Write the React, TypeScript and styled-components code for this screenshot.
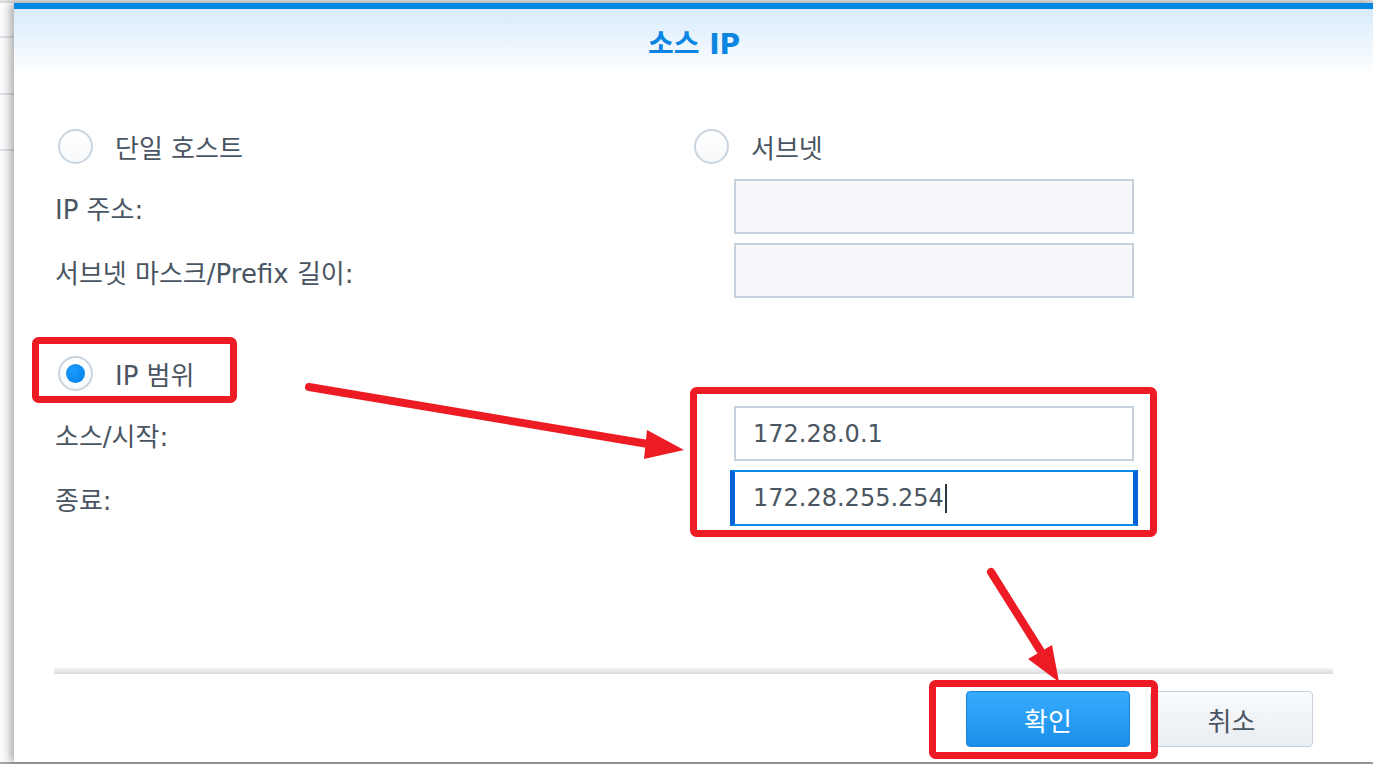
import React from "react";
import styled, { createGlobalStyle } from "styled-components";

const GlobalStyle = createGlobalStyle`
  html, body { margin: 0; padding: 0; background: #fafafa; overflow: hidden; }
  body { font-family: "DejaVu Sans", "Noto Sans CJK KR", sans-serif; }
  * { box-sizing: border-box; }
`;

const Page = styled.div`
  position: relative;
  width: 1373px;
  height: 764px;
  overflow: hidden;
  padding: 3px 0 0 14px;
  background:
    linear-gradient(#e6e6e6, #d4d4d4) top left / 100% 3px no-repeat,
    linear-gradient(#a4a4a4, #a4a4a4) bottom left / 100% 2px no-repeat,
    linear-gradient(
      to bottom,
      transparent 36px, #dce2e9 36px, #dce2e9 38px, transparent 38px,
      transparent 93px, #dce2e9 93px, #dce2e9 95px, transparent 95px,
      transparent 149px, #dce2e9 149px, #dce2e9 151px, transparent 151px
    ),
    #fbfbfb;
`;

const Dialog = styled.div`
  width: 1360px;
  height: 759px;
  background: #ffffff;
  display: flex;
  flex-direction: column;
  box-shadow: -4px 0 8px rgba(0, 0, 0, 0.3);
`;

const TopBar = styled.div`
  height: 6px;
  background: #0088e6;
`;

const Header = styled.div`
  height: 66px;
  background: linear-gradient(#d8ebfb, #ffffff);
  display: flex;
  align-items: center;
  justify-content: center;
`;

const Title = styled.div`
  font-size: 28px;
  font-weight: bold;
  color: #0a86e2;
`;

const Body = styled.div`
  flex: 1;
  padding: 53px 0 0 41px;
`;

const FormRow = styled.div<{ $h: number; $mt: number }>`
  display: grid;
  grid-template-columns: 639px 1fr;
  align-items: center;
  height: ${(p) => p.$h}px;
  margin-top: ${(p) => p.$mt}px;
`;

const Label = styled.div`
  font-size: 26px;
  color: #4a5562;
  padding-top: 1px;
`;

const RadioLabel = styled.div<{ $offset?: number }>`
  display: flex;
  align-items: center;
  gap: 22px;
  margin-left: ${(p) => p.$offset ?? 0}px;
  font-size: 26px;
  color: #4a5562;
`;

const RadioCircle = styled.div`
  width: 35px;
  height: 35px;
  border-radius: 50%;
  border: 2px solid #c9d4df;
  background: linear-gradient(#ffffff, #f7f9fb);
  display: grid;
  place-items: center;
  flex: none;
`;

const RadioDot = styled.div`
  width: 19px;
  height: 19px;
  border-radius: 50%;
  background: radial-gradient(circle at 40% 35%, #1c9cff, #0080e8);
`;

const Field = styled.div<{ $disabled?: boolean }>`
  width: 400px;
  height: 55px;
  margin-left: 40px;
  border: 2px solid #c6d1dc;
  background: ${(p) => (p.$disabled ? "#f5f7fa" : "#ffffff")};
  display: flex;
  align-items: center;
  padding-left: 17px;
  font-size: 24px;
  color: #4a5562;
`;

const FocusField = styled.div`
  width: 408px;
  height: 56px;
  margin-left: 36px;
  border-top: 2px solid #0a88e8;
  border-bottom: 2px solid #0a88e8;
  border-left: 5px solid #0064d8;
  border-right: 5px solid #0064d8;
  background: #ffffff;
  display: flex;
  align-items: center;
  padding-left: 18px;
  font-size: 24px;
  color: #4a5562;
`;

const Caret = styled.span`
  display: inline-block;
  width: 2px;
  height: 29px;
  background: #2e3740;
  margin-left: 1px;
`;

const Footer = styled.div`
  margin-left: 40px;
  width: 1279px;
  padding-bottom: 15px;
`;

const Separator = styled.div`
  height: 6px;
  background: linear-gradient(#f3f5f5, #e6e9e9 50%, #d8dbdb);
`;

const ButtonRow = styled.div`
  display: flex;
  justify-content: flex-end;
  gap: 20px;
  margin-top: 17px;
  padding-right: 20px;
`;

const Button = styled.div<{ $primary?: boolean }>`
  width: ${(p) => (p.$primary ? 164 : 163)}px;
  height: 56px;
  border-radius: 4px;
  display: flex;
  align-items: center;
  justify-content: center;
  font-size: 26px;
  border: 1px solid ${(p) => (p.$primary ? "#1b80d6" : "#c5d0db")};
  background: ${(p) =>
    p.$primary
      ? "linear-gradient(#37abfd, #1a8fe9)"
      : "linear-gradient(#f9fbfc, #e8edf2)"};
  color: ${(p) => (p.$primary ? "#ffffff" : "#4a5562")};
`;

const Overlay = styled.svg`
  position: absolute;
  left: 0;
  top: 0;
  width: 1373px;
  height: 764px;
  pointer-events: none;
`;

const RED = "#ed1c24";

export default function App() {
  return (
    <>
      <GlobalStyle />
      <Page>
        <Dialog>
          <TopBar />
          <Header>
            <Title>소스 IP</Title>
          </Header>
          <Body>
            <FormRow $h={35} $mt={0}>
              <RadioLabel $offset={3}>
                <RadioCircle />
                단일 호스트
              </RadioLabel>
              <RadioLabel>
                <RadioCircle />
                서브넷
              </RadioLabel>
            </FormRow>
            <FormRow $h={55} $mt={16}>
              <Label>IP 주소:</Label>
              <Field $disabled />
            </FormRow>
            <FormRow $h={55} $mt={9}>
              <Label>서브넷 마스크/Prefix 길이:</Label>
              <Field $disabled />
            </FormRow>
            <FormRow $h={35} $mt={57}>
              <RadioLabel $offset={3}>
                <RadioCircle>
                  <RadioDot />
                </RadioCircle>
                IP 범위
              </RadioLabel>
            </FormRow>
            <FormRow $h={55} $mt={16}>
              <Label>소스/시작:</Label>
              <Field>172.28.0.1</Field>
            </FormRow>
            <FormRow $h={56} $mt={9}>
              <Label>종료:</Label>
              <FocusField>
                172.28.255.254
                <Caret />
              </FocusField>
            </FormRow>
          </Body>
          <Footer>
            <Separator />
            <ButtonRow>
              <Button $primary>확인</Button>
              <Button>취소</Button>
            </ButtonRow>
          </Footer>
        </Dialog>
        <Overlay viewBox="0 0 1373 764">
          <rect x={35.5} y={340.5} width={198} height={59} rx={3} fill="none" stroke={RED} strokeWidth={7} />
          <rect x={693.5} y={390.5} width={460} height={143} rx={3} fill="none" stroke={RED} strokeWidth={7} />
          <rect x={932.5} y={683.5} width={222} height={72} rx={3} fill="none" stroke={RED} strokeWidth={7} />
          <line x1={309} y1={387} x2={648} y2={444} stroke={RED} strokeWidth={8} strokeLinecap="round" />
          <polygon points="647,430 684,450 644,459" fill={RED} />
          <line x1={991} y1={572} x2={1040} y2={650} stroke={RED} strokeWidth={8} strokeLinecap="round" />
          <polygon points="1028,659 1052,645 1059,682" fill={RED} />
        </Overlay>
      </Page>
    </>
  );
}
